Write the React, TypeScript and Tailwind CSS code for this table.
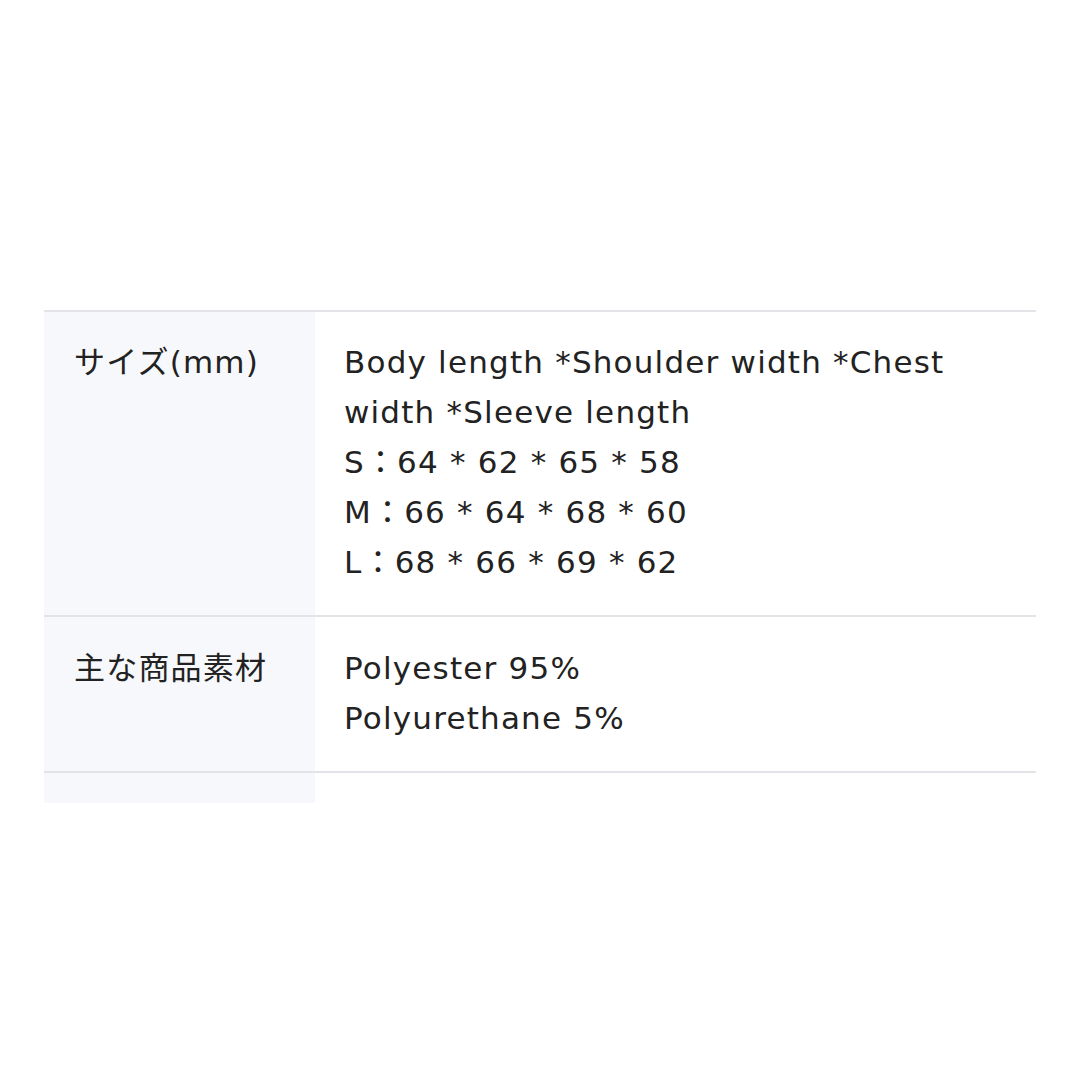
export default function App() {
  const font = { fontFamily: '"DejaVu Sans", "Noto Sans CJK JP", sans-serif' };
  return (
    <div className="w-[1080px] h-[1080px] bg-white" style={font}>
      <div className="pt-[310px] pl-[44px] w-[1036px]">
        <div className="border-t-[2px] border-[#e3e4e8]">
          <div className="flex border-b-[2px] border-[#e3e4e8]">
            <div className="w-[271px] shrink-0 bg-[#f7f8fb] pl-[30px] pt-[25px] text-[31px] tracking-[1.2px] leading-[50px] text-[#222]">
              サイズ(mm)
            </div>
            <div className="flex-1 pl-[29px] pr-[40px] pt-[25px] pb-[28px] text-[31px] tracking-[1.2px] leading-[50px] text-[#222]">
              <div>Body length *Shoulder width *Chest width *Sleeve length</div>
              <div>S：64 * 62 * 65 * 58</div>
              <div>M：66 * 64 * 68 * 60</div>
              <div>L：68 * 66 * 69 * 62</div>
            </div>
          </div>
          <div className="flex border-b-[2px] border-[#e3e4e8]">
            <div className="w-[271px] shrink-0 bg-[#f7f8fb] pl-[30px] pt-[26px] text-[31px] tracking-[1.2px] leading-[50px] text-[#222]">
              主な商品素材
            </div>
            <div className="flex-1 pl-[29px] pr-[40px] pt-[26px] pb-[28px] text-[31px] tracking-[1.2px] leading-[50px] text-[#222]">
              <div>Polyester 95%</div>
              <div>Polyurethane 5%</div>
            </div>
          </div>
          <div className="w-[271px] h-[30px] bg-[#f7f8fb]"></div>
        </div>
      </div>
    </div>
  );
}
